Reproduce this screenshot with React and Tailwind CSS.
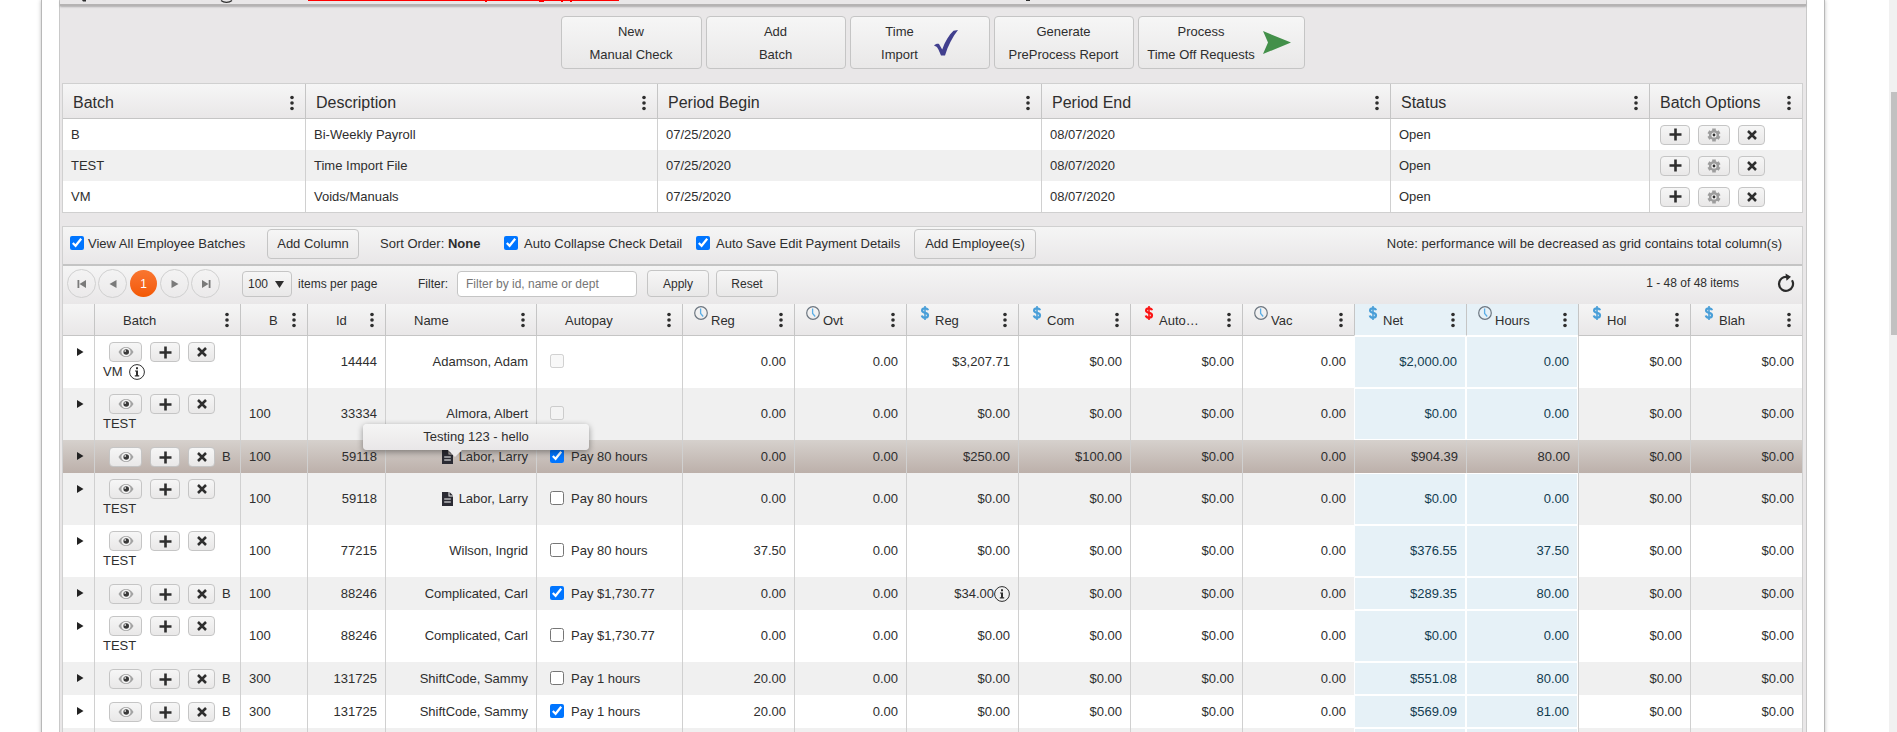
import React from "react";
import clsx from "clsx";

const batches = [
  { id: "B", description: "Bi-Weekly Payroll", begin: "07/25/2020", end: "08/07/2020", status: "Open" },
  { id: "TEST", description: "Time Import File", begin: "07/25/2020", end: "08/07/2020", status: "Open" },
  { id: "VM", description: "Voids/Manuals", begin: "07/25/2020", end: "08/07/2020", status: "Open" },
];

const employeeColumns = [
  { title: "Batch" },
  { title: "B" },
  { title: "Id" },
  { title: "Name" },
  { title: "Autopay" },
  { title: "Reg", icon: "clock" },
  { title: "Ovt", icon: "clock" },
  { title: "Reg", icon: "dollar" },
  { title: "Com", icon: "dollar" },
  { title: "Auto…", icon: "deduction" },
  { title: "Vac", icon: "clock" },
  { title: "Net", icon: "dollar", total: true },
  { title: "Hours", icon: "clock", total: true },
  { title: "Hol", icon: "dollar" },
  { title: "Blah", icon: "dollar" },
];

// values: Reg, Ovt, Reg $, Com, Auto, Vac, Net, Hours, Hol, Blah
const employees = [
  { batch: "VM", batchInfo: true, b: "", id: "14444", name: "Adamson, Adam", autopay: null, values: ["0.00", "0.00", "$3,207.71", "$0.00", "$0.00", "0.00", "$2,000.00", "0.00", "$0.00", "$0.00"] },
  { batch: "TEST", b: "100", id: "33334", name: "Almora, Albert", autopay: null, values: ["0.00", "0.00", "$0.00", "$0.00", "$0.00", "0.00", "$0.00", "0.00", "$0.00", "$0.00"] },
  { batch: "B", b: "100", id: "59118", name: "Labor, Larry", note: true, tooltip: "Testing 123 - hello", selected: true, autopay: "Pay 80 hours", checked: true, values: ["0.00", "0.00", "$250.00", "$100.00", "$0.00", "0.00", "$904.39", "80.00", "$0.00", "$0.00"] },
  { batch: "TEST", b: "100", id: "59118", name: "Labor, Larry", note: true, autopay: "Pay 80 hours", values: ["0.00", "0.00", "$0.00", "$0.00", "$0.00", "0.00", "$0.00", "0.00", "$0.00", "$0.00"] },
  { batch: "TEST", b: "100", id: "77215", name: "Wilson, Ingrid", autopay: "Pay 80 hours", values: ["37.50", "0.00", "$0.00", "$0.00", "$0.00", "0.00", "$376.55", "37.50", "$0.00", "$0.00"] },
  { batch: "B", b: "100", id: "88246", name: "Complicated, Carl", autopay: "Pay $1,730.77", checked: true, infoAt: 2, values: ["0.00", "0.00", "$34.00", "$0.00", "$0.00", "0.00", "$289.35", "80.00", "$0.00", "$0.00"] },
  { batch: "TEST", b: "100", id: "88246", name: "Complicated, Carl", autopay: "Pay $1,730.77", values: ["0.00", "0.00", "$0.00", "$0.00", "$0.00", "0.00", "$0.00", "0.00", "$0.00", "$0.00"] },
  { batch: "B", b: "300", id: "131725", name: "ShiftCode, Sammy", autopay: "Pay 1 hours", values: ["20.00", "0.00", "$0.00", "$0.00", "$0.00", "0.00", "$551.08", "80.00", "$0.00", "$0.00"] },
  { batch: "B", b: "300", id: "131725", name: "ShiftCode, Sammy", autopay: "Pay 1 hours", checked: true, values: ["20.00", "0.00", "$0.00", "$0.00", "$0.00", "0.00", "$569.09", "81.00", "$0.00", "$0.00"] },
];

/* ---------- icons ---------- */

const PlusIcon = () => (
  <svg width="13" height="13" viewBox="0 0 13 13" fill="#2e2e2e">
    <path d="M5.200 0.500h2.600v4.700h4.700v2.600H7.800v4.700H5.200V7.800H0.500V5.200h4.700z" />
  </svg>
);

const CloseIcon = () => (
  <svg width="10" height="10" viewBox="0 0 10 10" stroke="#2e2e2e" strokeWidth="2.500">
    <path d="M1 1l8 8M9 1L1 9" />
  </svg>
);

const EyeIcon = () => (
  <svg width="16" height="12" viewBox="0 0 16 12">
    <path d="M0.500 6C2.500 2.600 5 1 8 1s5.500 1.600 7.500 5C13.500 9.400 11 11 8 11S2.500 9.400.5 6z" fill="#a3a3a3" />
    <ellipse cx="8" cy="6" rx="4.600" ry="4.200" fill="#f4f4f4" />
    <circle cx="8.200" cy="6" r="2.800" fill="#3a3a3a" />
    <circle cx="7.200" cy="5" r="0.900" fill="#d8d8d8" />
  </svg>
);

const GearIcon = () => (
  <svg width="14" height="14" viewBox="0 0 14 14">
    <g stroke="#9d9d9d" strokeWidth="3.600">
      <path d="M7 0.500v13M1.400 3.750l11.200 6.500M12.600 3.750L1.400 10.250" />
    </g>
    <circle cx="7" cy="7" r="5.100" fill="#9d9d9d" />
    <circle cx="7" cy="7" r="2.600" fill="#f6f6f6" />
    <circle cx="7" cy="7" r="1.400" fill="#2e2e2e" />
  </svg>
);

const DotsIcon = () => (
  <svg width="4" height="16" viewBox="0 0 4 16" fill="#2e2e2e">
    <circle cx="2" cy="2.500" r="1.800" />
    <circle cx="2" cy="8" r="1.800" />
    <circle cx="2" cy="13.500" r="1.800" />
  </svg>
);

const ClockIcon = () => (
  <svg width="14" height="14" viewBox="0 0 14 14" fill="none">
    <circle cx="7" cy="7" r="6.300" stroke="#6c7680" strokeWidth="1.200" />
    <path d="M6.600 2.500v5l2.600 3" stroke="#5aaee6" strokeWidth="1.300" />
  </svg>
);

const DollarIcon = ({ color }) => (
  <svg width="14" height="14" viewBox="0 0 14 14" fill="none" stroke={color}>
    <path d="M10 4.200C9.600 2.900 8.500 2.300 7 2.300c-1.700 0-2.900.8-2.900 2.200 0 3.300 5.900 1.400 5.900 4.800 0 1.500-1.200 2.400-3 2.400-1.700 0-2.900-.7-3.200-2.200" strokeWidth="2.200" />
    <path d="M7 0v14" strokeWidth="1.600" />
  </svg>
);

const InfoIcon = () => (
  <svg width="16" height="16" viewBox="0 0 16 16" fill="none" className="shrink-0">
    <circle cx="8" cy="8" r="7.400" stroke="#2e2e2e" strokeWidth="1" />
    <path d="M7 3.200h2v2H7zM6 6.400h3v4.800h1.200v1.200H5.800v-1.200H7V7.600H6z" fill="#2e2e2e" />
  </svg>
);

const NoteIcon = () => (
  <svg width="11" height="14" viewBox="0 0 11 14" className="shrink-0">
    <path d="M0 0h6.500v4.500H11V14H0z" fill="#2b2b33" />
    <path d="M7.500 0L11 3.500H7.500z" fill="#2b2b33" />
    <path d="M2.200 7h6.600M2.200 10h6.600" stroke="#fff" strokeWidth="1.200" />
  </svg>
);

const RefreshIcon = () => (
  <svg width="18" height="19" viewBox="0 0 18 19" fill="none">
    <path d="M10.500 4A7 7 0 1 0 15 7.200" stroke="#2b2b2b" strokeWidth="2.200" />
    <path d="M8.500 0.500L14 3.800l-4.500 4z" fill="#2b2b2b" />
  </svg>
);

const CheckMark = () => (
  <svg width="24" height="26" viewBox="0 0 24 26">
    <path d="M0 15.500C1.500 14 3.500 13.500 5 14l3.200 5.500C11 11.500 15 5 19.500 0.800L24 0C18.500 7 14 15.500 11 25.500H7C5.500 21.500 3.500 17.500 2.500 16.800z" fill="#413f8e" />
  </svg>
);

const ArrowMark = () => (
  <svg width="28" height="23" viewBox="0 0 28 23">
    <path d="M0 0l28 11.500L0 23l5-11.500z" fill="#43904a" />
  </svg>
);

const pagerIcons = {
  first: "M0.500 1h1.800v8H0.500zM9 1v8L2.500 5z",
  prev: "M8.500 1v8L1.500 5z",
  next: "M1.500 1v8l7-4z",
  last: "M7.700 1h1.800v8H7.700zM1 1v8l6.500-4z",
};

/* ---------- controls ---------- */

const Button = ({ className, children, ...rest }) => (
  <button
    type="button"
    className={clsx("rounded border border-[#c5c5c5] bg-linear-to-b from-[#f6f6f6] to-[#e9e8e8]", className)}
    {...rest}
  >
    {children}
  </button>
);

const IconButton = ({ label, className, children }) => (
  <Button aria-label={label} className={clsx("flex h-5 items-center justify-center", className)}>
    {children}
  </Button>
);

const ColumnMenu = ({ title }) => (
  <button type="button" aria-label={`${title} column menu`} className="shrink-0 px-1">
    <DotsIcon />
  </button>
);

const Check = ({ className, ...rest }) => (
  <input type="checkbox" className={clsx("mb-0.5 size-3.5 shrink-0", className)} {...rest} />
);

const PagerButton = ({ name }) => (
  <button
    type="button"
    aria-label={`${name} page`}
    className="flex size-[29px] items-center justify-center rounded-full border border-[#d0d0d0]"
  >
    <svg width="10" height="10" viewBox="0 0 10 10" fill="#7a7a7a">
      <path d={pagerIcons[name]} />
    </svg>
  </button>
);

function ActionBar() {
  const big = "h-[53px] leading-[23px] flex items-center justify-center";
  return (
    <div className="flex justify-center gap-1 pt-2.5 pb-3.5">
      <Button className={clsx(big, "w-[141px]")}>
        <span>New<br />Manual Check</span>
      </Button>
      <Button className={clsx(big, "w-[140px]")}>
        <span>Add<br />Batch</span>
      </Button>
      <Button className={clsx(big, "w-[140px] gap-4")}>
        <span>Time<br />Import</span>
        <CheckMark />
      </Button>
      <Button className={clsx(big, "w-[140px]")}>
        <span>Generate<br />PreProcess Report</span>
      </Button>
      <Button className={clsx(big, "w-[167px] gap-2 pr-1")}>
        <span>Process<br />Time Off Requests</span>
        <ArrowMark />
      </Button>
    </div>
  );
}

function BatchTable() {
  const titles = ["Batch", "Description", "Period Begin", "Period End", "Status", "Batch Options"];
  return (
    <div className="border border-[#d0d0d0]">
      <table className="w-full table-fixed border-separate border-spacing-0">
        <colgroup>
          <col className="w-[242px]" />
          <col className="w-[352px]" />
          <col className="w-[384px]" />
          <col className="w-[349px]" />
          <col className="w-[259px]" />
          <col className="w-[153px]" />
        </colgroup>
        <thead>
          <tr className="h-[35px]">
            {titles.map((title, i) => (
              <th
                key={title}
                className={clsx(
                  "border-b border-[#c5c5c5] bg-linear-to-b from-[#f6f6f6] to-[#e9e7e8] p-0 text-left text-base font-normal",
                  i > 0 && "border-l"
                )}
              >
                <div className="flex items-center justify-between pt-[3px] pr-[7px] pl-2.5">
                  {title}
                  <ColumnMenu title={title} />
                </div>
              </th>
            ))}
          </tr>
        </thead>
        <tbody>
          {batches.map((batch) => (
            <tr key={batch.id} className="h-[31px] bg-white even:bg-[#f0f0f0]">
              <td className="px-2 py-0">{batch.id}</td>
              {[batch.description, batch.begin, batch.end, batch.status].map((text, i) => (
                <td key={i} className="border-l border-[#d0d0d0] px-2 py-0">{text}</td>
              ))}
              <td className="border-l border-[#d0d0d0] px-2.5 py-0">
                <div className="flex gap-2">
                  <IconButton label="Add" className="w-[30px]"><PlusIcon /></IconButton>
                  <IconButton label="Settings" className="w-8"><GearIcon /></IconButton>
                  <IconButton label="Remove" className="w-[27px]"><CloseIcon /></IconButton>
                </div>
              </td>
            </tr>
          ))}
        </tbody>
      </table>
    </div>
  );
}

function Toolbar() {
  return (
    <div className="flex h-[39px] items-center border-b-2 border-[#c4c4c4] bg-linear-to-b from-[#f5f5f5] to-[#e9e7e8] pr-5 pb-[3px] pl-[7px]">
      <label className="flex w-[197px] items-center gap-1">
        <Check defaultChecked />
        View All Employee Batches
      </label>
      <Button className="h-[30px] w-[92px]">Add Column</Button>
      <span className="ml-[21px] w-[124px]">
        Sort Order: <b>None</b>
      </span>
      <label className="flex w-48 items-center gap-1.5">
        <Check defaultChecked />
        Auto Collapse Check Detail
      </label>
      <label className="flex w-[218px] items-center gap-1.5">
        <Check defaultChecked />
        Auto Save Edit Payment Details
      </label>
      <Button className="h-[30px] w-[122px]">Add Employee(s)</Button>
      <span className="ml-auto">Note: performance will be decreased as grid contains total column(s)</span>
    </div>
  );
}

function Pager() {
  return (
    <div className="flex h-[38px] items-center bg-linear-to-b from-[#f5f5f5] to-[#e9e7e8] pr-[7px] pb-[3px] pl-1 text-xs">
      <div className="flex items-center gap-0.5">
        <PagerButton name="first" />
        <PagerButton name="prev" />
        <button
          type="button"
          aria-current="page"
          className="mx-px size-[27px] rounded-full bg-linear-to-b from-[#f9762f] to-[#f35800] text-white"
        >
          1
        </button>
        <PagerButton name="next" />
        <PagerButton name="last" />
      </div>
      <div className="relative ml-[22px]">
        <select
          aria-label="Items per page"
          className="h-[26px] w-[50px] appearance-none rounded border border-[#c5c5c5] bg-linear-to-b from-[#f6f6f6] to-[#e9e8e8] pl-[5px]"
        >
          <option>100</option>
        </select>
        <svg width="9" height="7" viewBox="0 0 9 7" className="pointer-events-none absolute top-2.5 right-2" fill="#2e2e2e">
          <path d="M0 0h9L4.500 7z" />
        </svg>
      </div>
      <span className="ml-1.5 w-[120px]">items per page</span>
      <label htmlFor="filter" className="w-[39px]">Filter:</label>
      <input
        id="filter"
        type="text"
        placeholder="Filter by id, name or dept"
        className="h-[26px] w-[180px] rounded border border-[#c5c5c5] bg-white px-2 placeholder:text-[#757575]"
      />
      <Button className="ml-2.5 h-[27px] w-[62px]">Apply</Button>
      <Button className="ml-[7px] h-[27px] w-[62px]">Reset</Button>
      <span className="mr-[38px] ml-auto pb-0.5">1 - 48 of 48 items</span>
      <button type="button" aria-label="Refresh" className="pb-0.5">
        <RefreshIcon />
      </button>
    </div>
  );
}

function BatchCell({ row }) {
  const inline = row.batch === "B";
  return (
    <div className={inline ? "flex items-center pt-[7px]" : "pt-1.5"}>
      <div className="ml-1.5 flex gap-2">
        <IconButton label="View" className="w-[33px]"><EyeIcon /></IconButton>
        <IconButton label="Add" className="w-[30px]"><PlusIcon /></IconButton>
        <IconButton label="Remove" className="w-[27px]"><CloseIcon /></IconButton>
      </div>
      {inline ? (
        <span className="ml-[7px]">{row.batch}</span>
      ) : (
        <div className="flex h-5 items-center gap-1.5">
          {row.batch}
          {row.batchInfo && <InfoIcon />}
        </div>
      )}
    </div>
  );
}

function Tooltip({ text }) {
  return (
    <div
      role="tooltip"
      className="absolute -top-4 -left-[23px] z-10 h-[26px] w-[226px] rounded bg-linear-to-b from-[#f5f5f5] to-[#e9e7e8] text-center leading-[26px] shadow-[0_2px_6px_rgba(0,0,0,0.4)]"
    >
      {text}
      <svg width="14" height="7" viewBox="0 0 14 7" className="absolute top-full left-[85px]" fill="#eceaeb">
        <path d="M0 0h14L7 7z" />
      </svg>
    </div>
  );
}

function EmployeeTable() {
  const cell = "border-l border-[#d0d0d0] px-2 py-0";
  return (
    <table className="w-full table-fixed border-separate border-spacing-0">
      <colgroup>
        <col className="w-[31px]" />
        <col className="w-[146px]" />
        <col className="w-[67px]" />
        <col className="w-[78px]" />
        <col className="w-[151px]" />
        <col className="w-[146px]" />
        {employeeColumns.slice(5).map((_, i) => (
          <col key={i} className="w-[112px]" />
        ))}
      </colgroup>
      <thead>
        <tr className="h-8">
          <th className="border-b border-[#c5c5c5] bg-linear-to-b from-[#f5f5f5] to-[#e9e7e8] p-0" />
          {employeeColumns.map((col, i) => (
            <th
              key={i}
              className={clsx(
                "border-b border-l border-l-[#c5c5c5] p-0 font-normal",
                col.total
                  ? "border-b-white bg-[#e6f1f7]"
                  : "border-b-[#c5c5c5] bg-linear-to-b from-[#f5f5f5] to-[#e9e7e8]"
              )}
            >
              <div className="flex h-[31px] items-center pr-[7px] pl-[11px]">
                <span className="mr-[3px] w-3.5 shrink-0 self-start pt-0.5">
                  {col.icon === "clock" && <ClockIcon />}
                  {col.icon === "dollar" && <DollarIcon color="#4a9fd8" />}
                  {col.icon === "deduction" && <DollarIcon color="#fb1414" />}
                </span>
                <span className="mr-auto pt-0.5">{col.title}</span>
                <ColumnMenu title={col.title} />
              </div>
            </th>
          ))}
        </tr>
      </thead>
      <tbody>
        {employees.map((row, r) => (
          <tr
            key={r}
            className={clsx(
              row.batch === "B" ? "h-[33px]" : "h-[52px]",
              row.selected ? "bg-linear-to-b from-[#d6d1cd] to-[#bcb0aa]" : "bg-white even:bg-[#f0f0f0]"
            )}
          >
            <td className="p-0 align-top">
              <button type="button" aria-label="Expand row" className="ml-3.5 block h-8">
                <svg width="7" height="8" viewBox="0 0 7 8" fill="#222">
                  <path d="M0 0v8l6.500-4z" />
                </svg>
              </button>
            </td>
            <td className={clsx(cell, "align-top")}>
              <BatchCell row={row} />
            </td>
            <td className={cell}>{row.b}</td>
            <td className={clsx(cell, "text-right")}>{row.id}</td>
            <td className={clsx(cell, "relative")}>
              <div className="flex items-center justify-end gap-1.5">
                {row.note && <NoteIcon />}
                {row.name}
              </div>
              {row.tooltip && <Tooltip text={row.tooltip} />}
            </td>
            <td className={cell}>
              <label className="ml-[5px] flex items-center gap-[7px]">
                <Check
                  defaultChecked={row.checked}
                  disabled={row.autopay === null}
                  aria-label={row.autopay === null ? `Autopay ${row.name}` : undefined}
                />
                {row.autopay}
              </label>
            </td>
            {row.values.map((value, i) => {
              const total = employeeColumns[i + 5].total && !row.selected;
              return (
                <td
                  key={i}
                  className={clsx(
                    "px-2 py-0 text-right",
                    total ? "border border-white bg-[#e6f1f7] text-[#123c50]" : "border-l border-[#d0d0d0]"
                  )}
                >
                  <div className="flex items-center justify-end">
                    {value}
                    {row.infoAt === i && <InfoIcon />}
                  </div>
                </td>
              );
            })}
          </tr>
        ))}
        <tr className="h-[33px] bg-white even:bg-[#f0f0f0]">
          <td />
          {employeeColumns.map((col, i) => (
            <td key={i} className={col.total ? "border border-white bg-[#e6f1f7]" : "border-l border-[#d0d0d0]"} />
          ))}
        </tr>
      </tbody>
    </table>
  );
}

export default function App() {
  return (
    <div className="flex h-screen overflow-hidden bg-white font-['Liberation_Sans',Arial,sans-serif] text-[13px] leading-4 text-[#2e2e2e]">
      <div className="min-w-0 flex-1 pr-16 pl-[41px]">
        <div className="border-x border-[#b8b8b8] px-[17px] shadow-[0_0_4px_rgba(0,0,0,0.25)]">
          <div className="border-x border-[#c9c9c9] bg-[#e9e7e8]">
            {/* bottom edge of the header panel */}
            <div className="h-1.5 border-b-2 border-[#b5b3b3] shadow-[0_1px_2px_rgba(0,0,0,0.25)]">
              <svg width="1000" height="3" viewBox="0 0 1000 3" fill="none" className="block">
                <path d="M248 0.500h311" stroke="#f00" strokeWidth="1" />
                <path d="M425 1h2v1h-2zM479 1h5v1h-5zM501 1h2v1h-2zM510 1h2v1h-2z" fill="#f00" />
                <path d="M22 0h4v1.500h-3zM966 0h4v1h-4z" fill="#2e2e2e" />
                <path d="M161 0.500c3 2.500 8 2.500 11 0" stroke="#2e2e2e" strokeWidth="1.200" />
              </svg>
            </div>
            <div className="pr-[3px] pl-0.5">
              <ActionBar />
              <BatchTable />
              <div className="mt-[13px] border border-[#d0d0d0]">
                <Toolbar />
                <Pager />
                <EmployeeTable />
              </div>
            </div>
          </div>
        </div>
      </div>
      {/* page scrollbar */}
      <div className="w-2 bg-[#f1f1f1] pt-[92px] pl-0.5">
        <div className="h-[243px] bg-[#c1c1c1]" />
      </div>
    </div>
  );
}
